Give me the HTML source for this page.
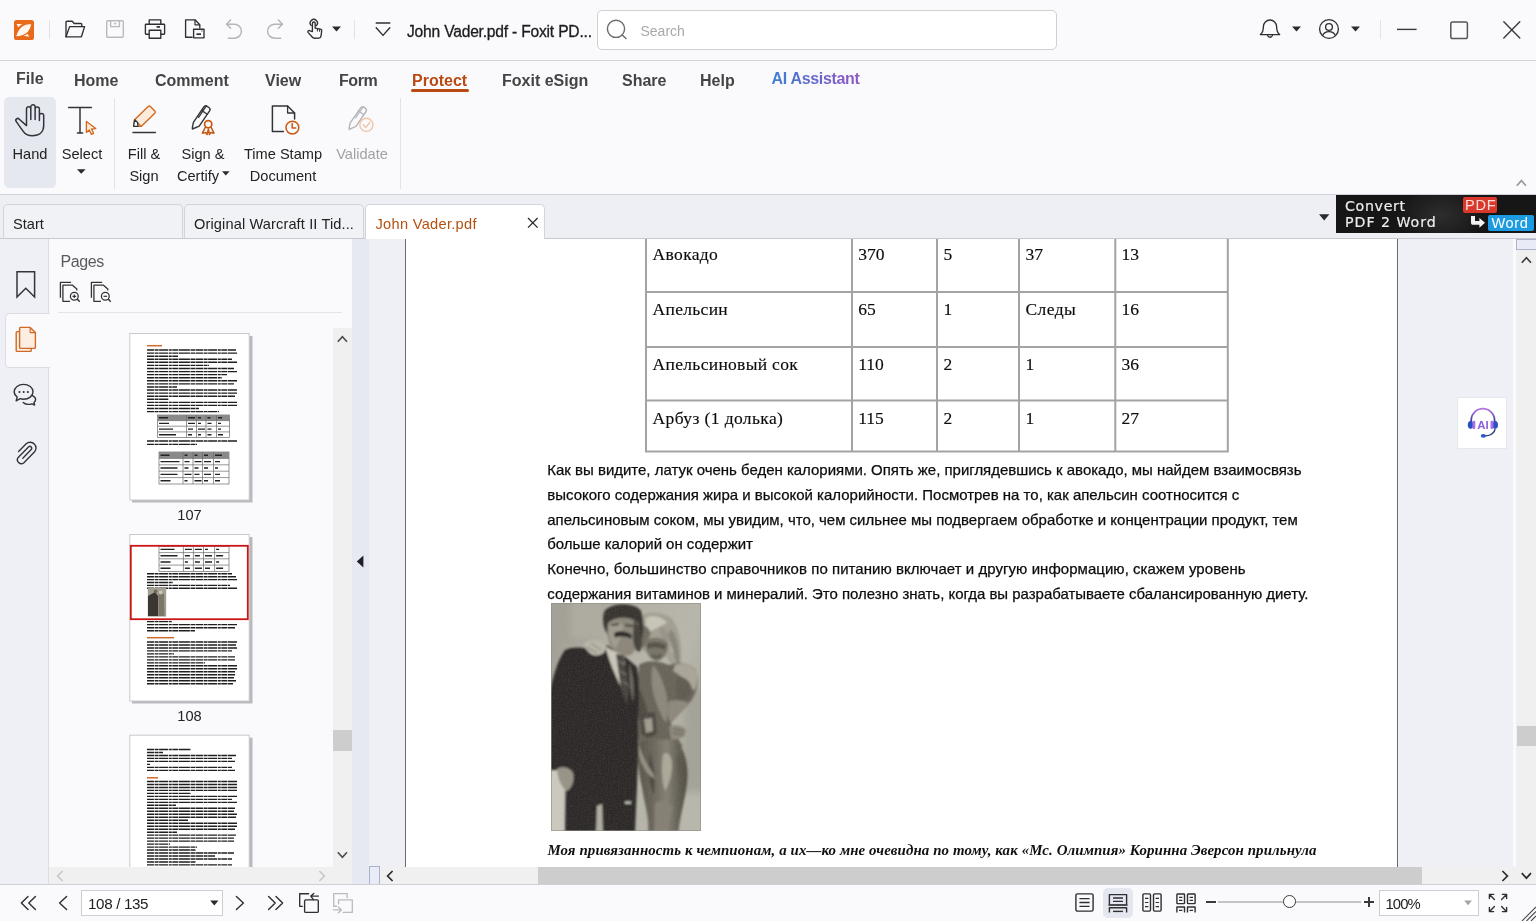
<!DOCTYPE html>
<html lang="en">
<head>
<meta charset="utf-8">
<title>John Vader.pdf - Foxit PDF Reader</title>
<style>
*{box-sizing:border-box;margin:0;padding:0}
html,body{width:1536px;height:921px;overflow:hidden;background:#fafafc;font-family:"Liberation Sans",sans-serif;color:#222}
.abs,.abs>*{position:absolute}
#app{position:relative;width:1536px;height:921px;overflow:hidden;will-change:transform}
#app div,#app span,#app svg{position:absolute}
svg{overflow:visible}
.t{white-space:nowrap;line-height:1}
/* title bar */
#titlebar{left:0;top:0;width:1536px;height:61px;background:#fafafc;border-bottom:1px solid #d2d3da}
.vsep{width:1px;background:#e2e3e8}
#search{left:597px;top:10px;width:460px;height:40px;border:1px solid #cfcfd4;border-radius:5px;background:#fff}
/* menu */
#menubar{left:0;top:61px;width:1536px;height:34px;background:#fafafc}
.menu{font-weight:bold;font-size:16px;color:#444;top:70.5px;white-space:nowrap;line-height:20px}
/* ribbon */
#ribbon{left:0;top:95px;width:1536px;height:100px;background:#fafafc;border-bottom:1px solid #cfd0d8}
.rl{font-size:14.6px;color:#222;white-space:nowrap;line-height:22px;text-align:center;margin-top:.6px}
/* tab bar */
#tabbar{left:0;top:195px;width:1536px;height:44px;background:#eeeff4;border-bottom:1px solid #c8c9d0}
.tab{top:204px;height:34px;border:1px solid #d3d4da;border-bottom:none;border-radius:5px 5px 0 0;background:#f1f2f6}
.tabt{font-size:14.6px;color:#222;top:214px;white-space:nowrap;line-height:20px}
/* panels */
#sidebar{left:0;top:239px;width:49px;height:645px;background:#eff0f5;border-right:1px solid #dcdde3}
#panel{left:49px;top:239px;width:303px;height:645px;background:#fafafc}
#splitter{left:352px;top:239px;width:17px;height:645px;background:#e6e9f2}
#docarea{left:369px;top:239px;width:1144px;height:628px;background:#eef0f5}
#page{left:405px;top:239px;width:993px;height:628px;background:#fff;border-left:1px solid #6a6a6a;border-right:1px solid #6a6a6a}
#status{left:0;top:884px;width:1536px;height:37px;background:#fafafc;border-top:1px solid #d0d1d8}
.ser{font-family:"Liberation Serif",serif;font-size:17.5px;line-height:20px;color:#0c0c0c;-webkit-text-stroke:.15px #0c0c0c;margin-top:-.4px}
.bod{font-size:14.97px;line-height:18px;color:#0c0c0c;-webkit-text-stroke:.25px #0c0c0c}
.cap{font-family:"Liberation Serif",serif;font-weight:bold;font-style:italic;font-size:14.9px;line-height:18px;color:#111}
</style>
</head>
<body>
<div id="app">
<div id="titlebar"></div>
<div id="menubar"></div>
<div id="ribbon"></div>
<div id="tabbar"></div>
<div id="sidebar"></div>
<div id="panel"></div>
<div id="splitter"></div>
<div id="docarea"></div>
<div id="page"></div>
<div id="status"></div>
<!--TITLE_S-->
<!-- ===== TITLE BAR ===== -->
<svg style="left:14px;top:20px" width="20" height="20" viewBox="0 0 20 20"><rect x="0" y="0" width="20" height="20" rx="2.6" fill="#ea6a1b"/><path d="M2.4 16.3 C3.400 12 5.400 8 10.600 5.200 C13 4.200 15.500 4 17.200 4.200 C16.800 7 15.400 10 13.400 12.200 C11 14.400 7 16 2.400 16.300 Z M2.600 4 L8.600 4 C6.600 5 5.200 6.200 4.300 7.600 Z M9.600 15.800 C11.400 15.200 12.600 14.600 13.600 13.800 L15.200 16.800 Z" fill="#fff6ee"/></svg>
<div class="vsep" style="left:49px;top:20px;height:19px"></div>
<svg style="left:64px;top:19px" width="22" height="20" viewBox="0 0 22 20" fill="none" stroke="#2e2e33" stroke-width="1.35" stroke-linejoin="round" stroke-linecap="round"><path d="M2 17.8 V3.2 a1 1 0 0 1 1-1 h5.2 l2 2.3 h6.6 a1 1 0 0 1 1 1 V7.6"/><path d="M2 17.8 L5.6 7.6 H20.6 L17.4 17.8 Z"/></svg>
<svg style="left:105px;top:19px" width="20" height="20" viewBox="0 0 20 20" fill="none" stroke="#b9b9be" stroke-width="1.4" stroke-linejoin="round"><rect x="1.7" y="1.7" width="16.6" height="16.6" rx="1"/><path d="M5.6 1.7 V7.6 H14.4 V1.7"/><path d="M9 4.6 h2.2" stroke-width="1.6"/></svg>
<svg style="left:144px;top:18px" width="22" height="22" viewBox="0 0 22 22" fill="none" stroke="#2e2e33" stroke-width="1.35" stroke-linejoin="round"><path d="M5.2 6.2 V1.8 H16.8 V6.2"/><path d="M5.2 16.2 H2 a.6 .6 0 0 1 -.6 -.6 V6.8 a.6 .6 0 0 1 .6 -.6 H20 a.6 .6 0 0 1 .6 .6 V15.6 a.6 .6 0 0 1 -.6 .6 H16.8"/><rect x="5.2" y="12.2" width="11.6" height="8"/><path d="M12.6 8.9 h3.4" stroke-width="1.7"/></svg>
<svg style="left:184px;top:18px" width="22" height="22" viewBox="0 0 22 22" fill="none" stroke="#2e2e33" stroke-width="1.35" stroke-linejoin="round"><path d="M8.6 19.2 H1.6 V1.8 H11 L15.8 6.8 V10.4"/><path d="M11 1.8 V6.8 H15.8" stroke-width="1.2"/><rect x="9.6" y="11.2" width="10.4" height="8.6" fill="#fafafc"/><path d="M12.4 16.2 h4.6" stroke-width="1.7"/><path d="M17.4 13 h1" stroke-width="1"/></svg>
<svg style="left:225px;top:18px" width="20" height="22" viewBox="0 0 20 22" fill="none" stroke="#b5b5ba" stroke-width="1.5" stroke-linecap="round" stroke-linejoin="round"><path d="M1.6 6.2 H9.4 A7 7 0 0 1 9.4 20.2 H3.4"/><path d="M5.6 2 L1.6 6.2 L5.6 10.2"/></svg>
<svg style="left:264px;top:18px" width="20" height="22" viewBox="0 0 20 22" fill="none" stroke="#b5b5ba" stroke-width="1.5" stroke-linecap="round" stroke-linejoin="round"><path d="M18.4 6.2 H10.6 A7 7 0 0 0 10.6 20.2 H16.6"/><path d="M14.4 2 L18.4 6.2 L14.4 10.2"/></svg>
<svg style="left:305px;top:18px" width="20" height="22" viewBox="0 0 20 22" fill="none" stroke="#2e2e33" stroke-width="1.35" stroke-linecap="round" stroke-linejoin="round"><path d="M6.2 7.6 A3.6 3.6 0 1 1 11.4 7.6"/><path d="M7.4 13.6 V5.4 a1.4 1.4 0 0 1 2.8 0 V10.2 l5.2 1 a1.6 1.6 0 0 1 1.3 1.8 l-.7 5 a2.6 2.6 0 0 1 -2.6 2.2 H9.6 a3 3 0 0 1 -2.4 -1.2 L3 14.4 a1.3 1.3 0 0 1 2 -1.6 Z"/><path d="M12.4 11 v2 M14.6 11.6 v1.6" stroke-width="1.1"/></svg>
<svg style="left:332px;top:26px" width="9" height="6" viewBox="0 0 9 6"><path d="M0 .4 H9 L4.5 5.6 Z" fill="#2a2a2e"/></svg>
<div class="vsep" style="left:354px;top:20px;height:19px"></div>
<svg style="left:375px;top:21px" width="16" height="16" viewBox="0 0 16 16" fill="none" stroke="#2e2e33" stroke-width="1.4" stroke-linecap="round" stroke-linejoin="round"><path d="M1.2 2 H14.8"/><path d="M1.2 6.8 L8 14.4 L14.8 6.8"/></svg>
<span class="t" id="wtitle" style="left:407px;top:21.7px;font-size:15.6px;line-height:20px;color:#1c1c20;-webkit-text-stroke:.3px #1c1c20;letter-spacing:-.2px">John Vader.pdf - Foxit PD...</span>
<div id="search"></div>
<svg style="left:606px;top:19px" width="22" height="22" viewBox="0 0 22 22" fill="none" stroke="#6a6a6e" stroke-width="1.4" stroke-linecap="round"><circle cx="10" cy="9.8" r="8.6"/><path d="M16.2 16 L20 19.6"/></svg>
<span class="t" id="searcht" style="left:640.5px;top:21px;font-size:14px;line-height:20px;color:#a9a9ad">Search</span>
<svg style="left:1258px;top:18px" width="24" height="22" viewBox="0 0 24 22" fill="none" stroke="#2e2e33" stroke-width="1.35" stroke-linecap="round" stroke-linejoin="round"><path d="M2.4 16.6 C5 14.6 5.4 12 5.4 8.6 A6.6 6.6 0 0 1 18.6 8.6 C18.6 12 19 14.6 21.6 16.6 Z"/><path d="M9.6 17.4 A2.5 2.5 0 0 0 14.4 17.4"/></svg>
<svg style="left:1292px;top:26px" width="9" height="6" viewBox="0 0 9 6"><path d="M0 .4 H9 L4.5 5.6 Z" fill="#2a2a2e"/></svg>
<svg style="left:1318px;top:18px" width="22" height="22" viewBox="0 0 22 22" fill="none" stroke="#2e2e33" stroke-width="1.35"><circle cx="11" cy="11" r="9.4"/><circle cx="11" cy="9" r="3.4"/><path d="M4.6 17.6 C5.8 14.6 8 13.6 11 13.6 C14 13.6 16.2 14.6 17.4 17.6"/></svg>
<svg style="left:1351px;top:26px" width="9" height="6" viewBox="0 0 9 6"><path d="M0 .4 H9 L4.5 5.6 Z" fill="#2a2a2e"/></svg>
<div class="vsep" style="left:1380px;top:20px;height:19px"></div>
<svg style="left:1397px;top:28px" width="20" height="3" viewBox="0 0 20 3"><path d="M0 1.4 H19.6" stroke="#3a3a3e" stroke-width="1.4"/></svg>
<svg style="left:1449px;top:20px" width="20" height="20" viewBox="0 0 20 20" fill="none" stroke="#55555a" stroke-width="1.5"><rect x="1.8" y="1.9" width="16.6" height="16.6" rx="1.8"/></svg>
<svg style="left:1502px;top:20px" width="20" height="20" viewBox="0 0 20 20" fill="none" stroke="#3a3a3e" stroke-width="1.4" stroke-linecap="round"><path d="M1.8 1.8 L17.8 18 M17.8 1.8 L1.8 18"/></svg>
<!--TITLE_E-->
<!--MENU_S-->
<!-- ===== MENU ===== -->
<span class="menu" id="m1" style="left:16px;top:69px">File</span>
<span class="menu" id="m2" style="left:74px">Home</span>
<span class="menu" id="m3" style="left:155px">Comment</span>
<span class="menu" id="m4" style="left:265px">View</span>
<span class="menu" id="m5" style="left:339px;letter-spacing:-.4px">Form</span>
<span class="menu" id="m6" style="left:412px;color:#b84a12">Protect</span>
<div style="left:411px;top:89px;width:58px;height:3.4px;border-radius:2px;background:#b84a12"></div>
<span class="menu" id="m7" style="left:502px">Foxit eSign</span>
<span class="menu" id="m8" style="left:622px">Share</span>
<span class="menu" id="m9" style="left:700px">Help</span>
<span class="menu" id="m10" style="left:771.5px;top:69px;letter-spacing:-.32px;background:linear-gradient(90deg,#3f7fd2 0%,#6a63cc 55%,#9357c4 100%);-webkit-background-clip:text;background-clip:text;color:transparent">AI Assistant</span>
<!--MENU_E-->
<!--RIBBON_S-->
<!-- ===== RIBBON ===== -->
<div style="left:4px;top:97px;width:52px;height:91px;border-radius:5px;background:#e6e8f0"></div>
<svg id="ic-hand" style="left:15px;top:103px" width="30" height="34" viewBox="0 0 30 34" fill="none" stroke="#33343a" stroke-width="1.5" stroke-linecap="round" stroke-linejoin="round"><path d="M11.5 22.6 V5.9 a2.15 2.15 0 0 1 4.3 0 V16.4 M15.8 16 V4 a2.15 2.15 0 0 1 4.3 0 V16 M20.1 16.400 V6.200 a2.150 2.150 0 0 1 4.300 0 V17.400 M24.400 17.400 V12.600 a2.150 2.150 0 0 1 4.300 0 V22.600 C28.700 29.400 24 32.800 17.400 32.800 C12.800 32.800 10.200 31.400 8.200 28.400 L1.300 18.600 a1.900 1.900 0 0 1 3 -2.400 L11.500 22.600"/></svg>
<span class="rl" id="r1" style="left:4px;top:142px;width:52px">Hand</span>
<svg id="ic-select" style="left:67px;top:105px" width="32" height="32" viewBox="0 0 32 32" fill="none" stroke-linecap="round" stroke-linejoin="round"><path d="M1.6 2.6 H24.4 M13 2.6 V28 M10.4 28 H15.6" stroke="#33343a" stroke-width="1.5"/><path d="M19.4 16.4 L19.4 27.4 L22.2 25 L24.4 29.4 L26.6 28.3 L24.5 24 L28.8 23.6 Z" stroke="#d2691e" stroke-width="1.3" fill="#fde9d6"/></svg>
<span class="rl" id="r2" style="left:56px;top:142px;width:52px">Select</span>
<svg style="left:77px;top:169px" width="9" height="5" viewBox="0 0 9 5"><path d="M0 .2 H8.6 L4.3 4.8 Z" fill="#2a2a2e"/></svg>
<div class="vsep" style="left:114px;top:98px;height:91px"></div>
<svg id="ic-fill" style="left:131px;top:105px" width="27" height="29" viewBox="0 0 27 29" fill="none" stroke-linecap="round" stroke-linejoin="round"><path d="M2.6 21.4 L3.6 14.8 L17.2 1.6 a1.6 1.6 0 0 1 2.2 0 L23.8 6 a1.6 1.6 0 0 1 0 2.2 L10.2 21.4 Z" stroke="#d2691e" stroke-width="1.4" fill="#fdebdb"/><path d="M3.6 14.8 L10.2 21.4" stroke="#d2691e" stroke-width="1.3"/><path d="M2.6 21.4 L3.6 14.8 L6.6 17.6 L7 21.4 Z" stroke="#33343a" stroke-width="1.3" fill="#fafafc"/><path d="M2 27.4 H24.4" stroke="#33343a" stroke-width="1.5"/></svg>
<span class="rl" id="r3" style="left:118px;top:142px;width:52px">Fill &amp;<br>Sign</span>
<svg id="ic-sign" style="left:190px;top:104px" width="27" height="32" viewBox="0 0 27 32" fill="none" stroke-linecap="round" stroke-linejoin="round"><path d="M2.4 23.4 L3.4 18.4 L13.8 3 a2.4 2.4 0 0 1 3.3 -.7 l1.8 1.2 a2.4 2.4 0 0 1 .7 3.3 L9.2 22.2 L2.4 25 Z" stroke="#33343a" stroke-width="1.4"/><path d="M11.6 6.4 L17.2 10.2 M16.4 1.8 L8.6 13.4" stroke="#33343a" stroke-width="1.3"/><circle cx="18.2" cy="20.2" r="3.6" stroke="#c85a14" stroke-width="1.7"/><path d="M15.4 23.2 L12.4 29.2 L15.6 28.4 L17 30.6 L18.4 25 M21 23.2 L24 29.2 L20.8 28.4 L19.4 30.6 L18.4 25" stroke="#c85a14" stroke-width="1.5"/></svg>
<span class="rl" id="r4" style="left:173px;top:142px;width:60px">Sign &amp;<br><span style="position:static;margin-right:10px">Certify</span></span>
<svg style="left:222px;top:171px" width="8" height="5" viewBox="0 0 8 5"><path d="M0 .2 H7.6 L3.8 4.4 Z" fill="#2a2a2e"/></svg>
<svg id="ic-ts" style="left:270px;top:104px" width="31" height="32" viewBox="0 0 31 32" fill="none" stroke-linecap="round" stroke-linejoin="round"><path d="M13.4 27.6 H2.4 V2 H17.6 L24.6 9 V15" stroke="#33343a" stroke-width="1.5"/><path d="M17.6 2 V9 H24.6" stroke="#33343a" stroke-width="1.3"/><circle cx="22.4" cy="23.6" r="6.4" stroke="#c85a14" stroke-width="1.5" fill="#fafafc"/><path d="M22.2 19.6 V24 H25.8" stroke="#c85a14" stroke-width="1.5"/></svg>
<span class="rl" id="r5" style="left:238px;top:142px;width:90px">Time Stamp<br>Document</span>
<svg id="ic-val" style="left:347px;top:105px" width="28" height="30" viewBox="0 0 28 30" fill="none" stroke-linecap="round" stroke-linejoin="round"><path d="M2.2 22.8 L3.2 17.8 L13.6 2.8 a2.3 2.3 0 0 1 3.2 -.6 l1.6 1.1 a2.3 2.3 0 0 1 .6 3.2 L9 21.4 L2.2 24.4 Z" stroke="#b4b4b9" stroke-width="1.4"/><path d="M11.4 6 L16.6 9.6 M16.2 1.6 L8.6 12.8" stroke="#b4b4b9" stroke-width="1.2"/><circle cx="19.4" cy="19.8" r="6.6" stroke="#efc7ab" stroke-width="1.4" fill="#fafafc"/><path d="M16.2 19.8 L18.6 22.4 L22.8 17.4" stroke="#efc7ab" stroke-width="1.5"/></svg>
<span class="rl" id="r6" style="left:332px;top:142px;width:60px;color:#a2a2a6">Validate</span>
<div class="vsep" style="left:400px;top:98px;height:91px"></div>
<svg style="left:1516px;top:179px" width="11" height="8" viewBox="0 0 11 8" fill="none" stroke="#9a9a9e" stroke-width="1.7"><path d="M.8 6.8 L5.4 1.6 L10 6.8"/></svg>
<!--RIBBON_E-->
<!--TABS_S-->
<!-- ===== TABS ===== -->
<div class="tab" style="left:3px;width:180px"></div>
<div class="tab" style="left:184px;width:180px"></div>
<div class="tab" style="left:365px;width:180px;background:#fff;height:35px"></div>
<span class="tabt" id="tb1" style="left:13px">Start</span>
<span class="tabt" id="tb2" style="left:194px;letter-spacing:.12px">Original Warcraft II Tid...</span>
<span class="tabt" id="tb3" style="left:375.5px;letter-spacing:.3px;color:#b5500f">John Vader.pdf</span>
<svg style="left:527px;top:217px" width="12" height="12" viewBox="0 0 12 12" fill="none" stroke="#2a2a2e" stroke-width="1.3"><path d="M1 1 L10.6 10.6 M10.6 1 L1 10.6"/></svg>
<svg style="left:1319px;top:214px" width="11" height="7" viewBox="0 0 11 7"><path d="M0 .3 H10.4 L5.2 6.4 Z" fill="#2a2a2e"/></svg>
<div id="banner" style="left:1336px;top:195px;width:200px;height:38px;background:#161616;overflow:hidden">
 <div style="left:60px;top:-10px;width:90px;height:60px;background:radial-gradient(ellipse at center,rgba(255,255,255,.10),rgba(255,255,255,0) 70%)"></div>
 <span class="t" id="bn1" style="left:9px;top:2.6px;font-family:'DejaVu Sans',sans-serif;font-size:14.2px;line-height:16px;color:#ececec;letter-spacing:.67px;-webkit-text-stroke:.2px #ececec">Convert</span>
 <span class="t" id="bn2" style="left:9px;top:19.2px;font-family:'DejaVu Sans',sans-serif;font-size:14.2px;line-height:16px;color:#ececec;letter-spacing:.95px;-webkit-text-stroke:.2px #ececec">PDF 2 Word</span>
 <div style="left:127px;top:2.4px;width:34px;height:16px;border-radius:2px;background:#d9382c"></div>
 <span class="t" id="bn3" style="left:129px;top:2.4px;font-size:14.6px;line-height:16px;color:#fbdcd6;letter-spacing:.8px">PDF</span>
 <svg style="left:134px;top:20px" width="16" height="14" viewBox="0 0 16 14"><path d="M1 1 H5 V6 H9.4 V3 L15 7.8 L9.4 12.8 V9.8 H3.4 C1.6 9.8 1 8.8 1 7.4 Z" fill="#f4f4f4"/></svg>
 <div style="left:152px;top:20.4px;width:46px;height:15.4px;border-radius:2px;background:#1d9be2"></div>
 <span class="t" id="bn4" style="left:155.5px;top:20.2px;font-size:14.6px;line-height:16px;color:#fff;letter-spacing:.6px">Word</span>
</div>
<!--TABS_E-->
<!--SIDEBAR_S-->
<!-- ===== SIDEBAR ===== -->
<svg style="left:15px;top:270px" width="22" height="29" viewBox="0 0 22 29" fill="none" stroke="#33343a" stroke-width="1.5" stroke-linejoin="miter"><path d="M2 1.8 H19.6 V27 L10.8 18.2 L2 27 Z"/></svg>
<div style="left:5px;top:313px;width:45px;height:55px;background:#fafafc;border:1px solid #dcdde3;border-right:none;border-radius:5px 0 0 5px"></div>
<svg style="left:15px;top:326px" width="22" height="27" viewBox="0 0 22 27" fill="none" stroke="#cf6a26" stroke-width="1.4" stroke-linejoin="round"><path d="M4.6 5.6 H2 a.8 .8 0 0 0 -.8 .8 V24.6 a.8 .8 0 0 0 .8 .8 H15.4 a.8 .8 0 0 0 .8 -.8 V22.4" fill="#fdeee2"/><path d="M4.6 2.2 a.8 .8 0 0 1 .8 -.8 H15.2 L20.4 6.6 V21.6 a.8 .8 0 0 1 -.8 .8 H5.4 a.8 .8 0 0 1 -.8 -.8 Z" fill="#fdeee2"/><path d="M15.2 1.4 V6.6 H20.4" stroke-width="1.2"/></svg>
<svg style="left:13px;top:383px" width="24" height="23" viewBox="0 0 24 23" fill="none" stroke="#33343a" stroke-width="1.4" stroke-linejoin="round" stroke-linecap="round"><path d="M19.4 12.6 C21.4 13.6 22.6 15 22.6 16.6 C22.6 17.8 22 18.8 21 19.6 L21.6 22 L18.8 20.8 C17.8 21.2 16.8 21.4 15.6 21.4 C13.4 21.4 11.4 20.6 10.2 19.4"/><path d="M10.6 1.4 C15.8 1.4 20 4.6 20 8.8 C20 13 15.8 16.2 10.6 16.2 C9.4 16.2 8.2 16 7.2 15.7 L3.2 17.8 L4.2 14 C2.4 12.7 1.2 10.9 1.2 8.8 C1.2 4.6 5.4 1.4 10.6 1.4 Z"/><path d="M6.4 8.9 h.1 M10.6 8.9 h.1 M14.8 8.9 h.1" stroke-width="2"/></svg>
<svg style="left:15px;top:441px" width="23" height="25" viewBox="0 0 23 25" fill="none" stroke="#33343a" stroke-width="1.4" stroke-linecap="round" stroke-linejoin="round"><path transform="rotate(180 11.5 12.7)" d="M15.2 8.2 L6.8 16.8 a1.9 1.9 0 0 0 2.7 2.7 L19.6 9.2 a3.9 3.9 0 0 0 -5.5 -5.5 L3.6 14.4 a5.8 5.8 0 0 0 8.2 8.2 L19.4 15"/></svg>
<!--SIDEBAR_E-->
<!--PANEL_S-->
<!-- ===== PANEL ===== -->
<span class="t" id="pgs" style="left:60.5px;top:251px;font-size:16px;line-height:22px;color:#5a5b61;letter-spacing:-.4px">Pages</span>
<svg style="left:52px;top:274px" width="35" height="35" viewBox="52 274 35 35" fill="none" stroke="#33343a" stroke-width="1.3" stroke-linecap="butt" stroke-linejoin="round"><path d="M71.100 282.400 H60.400 V297.700"/><path d="M70 301.300 H62.900 V285.200 H72.500 L76.800 289 V290.600"/><circle cx="74.300" cy="296.300" r="3.900"/><path d="M77.200 299 L79.700 301.700" stroke-width="1.500"/><path d="M72.500 296.300 H76.100 M74.300 294.500 V298.100" stroke-width="1.200"/></svg>
<svg style="left:83px;top:274px" width="35" height="35" viewBox="52 274 35 35" fill="none" stroke="#33343a" stroke-width="1.3" stroke-linecap="butt" stroke-linejoin="round"><path d="M71.100 282.400 H60.400 V297.700"/><path d="M70 301.300 H62.900 V285.200 H72.500 L76.800 289 V290.600"/><circle cx="74.300" cy="296.300" r="3.900"/><path d="M77.200 299 L79.700 301.700" stroke-width="1.500"/><path d="M72.500 296.300 H76.100" stroke-width="1.200"/></svg>
<div style="left:58px;top:312px;width:284px;height:1px;background:#e3e4e9"></div>
<div id="thumbs" style="left:49px;top:328px;width:284px;height:539px;overflow:hidden">
<svg style="left:0;top:0" width="284" height="539" viewBox="49 328 284 539">
<rect x="132" y="336.0" width="120.5" height="166.5" fill="#b9b9bd"/><rect x="129.8" y="333.5" width="119.4" height="166.5" fill="#fff" stroke="#c9c9cd" stroke-width="1"/>
<path d="M147 345.7H162" stroke="#d26a2a" stroke-width="1.5"/>
<path d="M147.0 350.0H236.0M147.0 353.1H237.0M147.0 356.2H178.0M147.0 359.2H232.0M147.0 362.3H237.0M147.0 365.4H209.0M147.0 368.5H234.0M147.0 371.6H237.0M147.0 374.6H227.0M147.0 377.7H222.0M147.0 380.8H237.0M147.0 383.9H234.0M147.0 387.0H177.0M147.0 390.0H237.0M147.0 393.1H237.0M147.0 396.2H235.0M147.0 399.3H169.0M147.0 402.4H237.0M147.0 405.4H237.0M147.0 408.5H199.0M147.0 411.6H219.0" stroke="#1f1f1f" stroke-width="1.4" stroke-dasharray="7 .6 4 .5 9 .7 3 .5 6 .6 11 .6 5 .5" />
<rect x="157.5" y="415.0" width="72.0" height="22.5" fill="#fff" stroke="#6a6a6a" stroke-width=".7"/><rect x="157.5" y="415.0" width="72.0" height="5.6" fill="#8a8a8a"/><path d="M157.5 420.6H229.5M157.5 426.2H229.5M157.5 431.9H229.5M186.5 415.0V437.5M196.5 415.0V437.5M206.0 415.0V437.5M216.5 415.0V437.5" stroke="#6a6a6a" stroke-width=".7"/><path d="M159.0 417.8h9.0M188.0 417.8h7.0M198.0 417.8h3.0M207.5 417.8h3.0M218.0 417.8h4.0M159.0 423.4h10.0M188.0 423.4h7.0M198.0 423.4h3.0M207.5 423.4h4.0M218.0 423.4h3.0M159.0 429.1h14.0M188.0 429.1h5.0M198.0 429.1h7.0M207.5 429.1h4.0M218.0 429.1h3.0M159.0 434.7h17.0M188.0 434.7h4.0M198.0 434.7h3.0M207.5 434.7h4.0M218.0 434.7h5.0" stroke="#222" stroke-width="1.4"/>
<path d="M147.0 441.0H237.0M147.0 444.4H197.0" stroke="#1f1f1f" stroke-width="1.4" stroke-dasharray="7 .6 4 .5 9 .7 3 .5 6 .6 11 .6 5 .5" />
<rect x="159.0" y="452.0" width="70.0" height="32.0" fill="#fff" stroke="#6a6a6a" stroke-width=".7"/><rect x="159.0" y="452.0" width="70.0" height="6.4" fill="#8a8a8a"/><path d="M159.0 458.4H229.0M159.0 464.8H229.0M159.0 471.2H229.0M159.0 477.6H229.0M183.0 452.0V484.0M193.0 452.0V484.0M202.5 452.0V484.0M213.5 452.0V484.0" stroke="#6a6a6a" stroke-width=".7"/><path d="M160.5 455.2h9.0M184.5 455.2h3.0M194.5 455.2h3.0M204.0 455.2h4.0M215.0 455.2h7.0M160.5 461.6h19.0M184.5 461.6h5.0M194.5 461.6h7.0M204.0 461.6h7.0M215.0 461.6h5.0M160.5 468.0h17.0M184.5 468.0h4.0M194.5 468.0h4.0M204.0 468.0h4.0M215.0 468.0h3.0M160.5 474.4h17.0M184.5 474.4h7.0M194.5 474.4h5.0M204.0 474.4h7.0M215.0 474.4h5.0M160.5 480.8h10.0M184.5 480.8h3.0M194.5 480.8h7.0M204.0 480.8h4.0M215.0 480.8h5.0" stroke="#222" stroke-width="1.4"/>
<rect x="132" y="537.0" width="120.5" height="166.5" fill="#b9b9bd"/><rect x="129.8" y="534.5" width="119.4" height="166.5" fill="#fff" stroke="#c9c9cd" stroke-width="1"/>
<rect x="159.0" y="546.3" width="70.0" height="25.1" fill="#fff" stroke="#6a6a6a" stroke-width=".7"/><path d="M159.0 552.6H229.0M159.0 558.8H229.0M159.0 565.1H229.0M183.4 546.3V571.4M193.4 546.3V571.4M203.5 546.3V571.4M214.6 546.3V571.4" stroke="#6a6a6a" stroke-width=".7"/><path d="M160.5 549.4h14.0M184.9 549.4h7.0M194.9 549.4h7.0M205.0 549.4h3.0M216.1 549.4h3.0M160.5 555.7h17.0M184.9 555.7h5.0M194.9 555.7h5.0M205.0 555.7h7.0M216.1 555.7h7.0M160.5 562.0h10.0M184.9 562.0h3.0M194.9 562.0h5.0M205.0 562.0h7.0M216.1 562.0h3.0M160.5 568.3h10.0M184.9 568.3h5.0M194.9 568.3h7.0M205.0 568.3h5.0M216.1 568.3h7.0" stroke="#222" stroke-width="1.4"/>
<path d="M147.0 573.8H232.0M147.0 576.7H236.0M147.0 579.6H237.0M147.0 582.5H173.0M147.0 585.4H230.0M147.0 588.3H237.0" stroke="#1f1f1f" stroke-width="1.4" stroke-dasharray="7 .6 4 .5 9 .7 3 .5 6 .6 11 .6 5 .5" />
<rect x="147.8" y="588" width="18.4" height="28.6" fill="#a29e90"/><path d="M148 596 L155 592 L158 596 L158 616 L148 616 Z" fill="#3a3733"/><path d="M158.5 592 L164 594 L164.5 616 L158.5 616 Z" fill="#7d776a"/><circle cx="155.6" cy="591.4" r="1.8" fill="#6e685c"/><circle cx="160.6" cy="592.4" r="2" fill="#c9c4b4"/>
<path d="M147.0 621.6H172.0M147.0 624.6H237.0M147.0 627.7H235.0M147.0 630.8H195.0" stroke="#1f1f1f" stroke-width="1.4" stroke-dasharray="7 .6 4 .5 9 .7 3 .5 6 .6 11 .6 5 .5" />
<path d="M147 637.7H174" stroke="#d26a2a" stroke-width="1.5"/>
<path d="M147.0 642.0H237.0M147.0 645.0H236.0M147.0 648.0H237.0M147.0 650.9H232.0M147.0 653.9H174.0M147.0 656.9H235.0M147.0 659.9H235.0M147.0 662.9H205.0M147.0 665.8H237.0M147.0 668.8H237.0M147.0 671.8H235.0M147.0 674.8H235.0M147.0 677.8H234.0M147.0 680.7H236.0M147.0 683.7H233.0" stroke="#1f1f1f" stroke-width="1.4" stroke-dasharray="7 .6 4 .5 9 .7 3 .5 6 .6 11 .6 5 .5" />
<rect x="130.8" y="545.8" width="117" height="73.4" fill="none" stroke="#cc1616" stroke-width="1.8"/>
<rect x="132" y="737.7" width="120.5" height="165.3" fill="#b9b9bd"/><rect x="129.8" y="735.2" width="119.4" height="165.3" fill="#fff" stroke="#c9c9cd" stroke-width="1"/>
<path d="M147.0 749.5H191.0M147.0 752.5H163.0M147.0 755.5H236.0M147.0 758.4H232.0M147.0 761.4H235.0M147.0 764.4H150.0M147.0 767.4H232.0M147.0 770.4H235.0" stroke="#1f1f1f" stroke-width="1.4" stroke-dasharray="7 .6 4 .5 9 .7 3 .5 6 .6 11 .6 5 .5" />
<path d="M147 777.8H158" stroke="#d26a2a" stroke-width="1.5"/>
<path d="M147.0 781.5H237.0M147.0 784.5H237.0M147.0 787.5H237.0M147.0 790.4H237.0M147.0 793.4H191.0M147.0 796.4H237.0M147.0 799.4H232.0M147.0 802.4H237.0M147.0 805.3H176.0M147.0 808.3H235.0M147.0 811.3H234.0M147.0 814.3H237.0M147.0 817.3H236.0M147.0 820.2H188.0M147.0 823.2H237.0M147.0 826.2H237.0M147.0 829.2H235.0M147.0 832.2H177.0M147.0 835.1H236.0M147.0 838.1H234.0M147.0 841.1H234.0M147.0 844.1H170.0M147.0 847.1H197.0M147.0 850.0H196.0M147.0 853.0H234.0M147.0 856.0H215.0M147.0 859.0H232.0M147.0 862.0H196.0M147.0 864.9H232.0" stroke="#1f1f1f" stroke-width="1.4" stroke-dasharray="7 .6 4 .5 9 .7 3 .5 6 .6 11 .6 5 .5" />
</svg>
<span class="t" id="n107" style="left:129px;top:505px;width:121px;text-align:center;font-size:14.6px;line-height:20px;color:#222;transform:translate(-49px,-328px)">107</span>
<span class="t" id="n108" style="left:129px;top:706px;width:121px;text-align:center;font-size:14.6px;line-height:20px;color:#222;transform:translate(-49px,-328px)">108</span>
</div>
<div style="left:333px;top:328px;width:19px;height:539px;background:#f0f0f0"></div>
<svg style="left:337px;top:335px" width="11" height="8" viewBox="0 0 11 8" fill="none" stroke="#4a4a4e" stroke-width="1.6"><path d="M.8 6.8 L5.4 1.8 L10 6.8"/></svg>
<div style="left:333px;top:730px;width:19px;height:21px;background:#cdcdcd"></div>
<svg style="left:337px;top:851px" width="11" height="8" viewBox="0 0 11 8" fill="none" stroke="#4a4a4e" stroke-width="1.6"><path d="M.8 1.2 L5.4 6.2 L10 1.2"/></svg>
<div style="left:49px;top:867px;width:303px;height:17px;background:#f0f0f0"></div>
<svg style="left:56px;top:870px" width="8" height="12" viewBox="0 0 8 12" fill="none" stroke="#c6c6c8" stroke-width="1.6"><path d="M6.6 1 L1.6 6 L6.6 11"/></svg>
<svg style="left:318px;top:870px" width="8" height="12" viewBox="0 0 8 12" fill="none" stroke="#c6c6c8" stroke-width="1.6"><path d="M1.4 1 L6.4 6 L1.4 11"/></svg>
<svg style="left:356px;top:555px" width="8" height="13" viewBox="0 0 8 13"><path d="M7.4 .6 V12.4 L.8 6.5 Z" fill="#1e1e22"/></svg>
<!--PANEL_E-->
<!--DOC_S-->
<!-- ===== DOC ===== -->
<div id="pagec" style="left:406px;top:239px;width:991px;height:628px;overflow:hidden">
<svg style="left:0;top:0" width="991" height="628" viewBox="406 239 991 628">
<path d="M646.0 236V452.4M852.0 236V452.4M937.0 236V452.4M1019.0 236V452.4M1115.3 236V452.4M1227.8 236V452.4M645.0 292.0H1228.8M645.0 347.0H1228.8M645.0 400.6H1228.8M645.0 451.4H1228.8" stroke="#a3a3a3" stroke-width="2" fill="none"/>
</svg>
<span class="t ser" id="c1" style="letter-spacing:0.340px;left:246.6px;top:5.2px">Авокадо</span>
<span class="t ser" id="c2" style="left:452.2px;top:5.2px">370</span>
<span class="t ser" id="c3" style="left:537.6px;top:5.2px">5</span>
<span class="t ser" id="c4" style="left:619.4px;top:5.2px">37</span>
<span class="t ser" id="c5" style="left:715.6px;top:5.2px">13</span>
<span class="t ser" id="c6" style="letter-spacing:0.300px;left:246.6px;top:59.9px">Апельсин</span>
<span class="t ser" id="c7" style="left:452.2px;top:59.9px">65</span>
<span class="t ser" id="c8" style="left:537.6px;top:59.9px">1</span>
<span class="t ser" id="c9" style="letter-spacing:0.460px;left:619.4px;top:59.9px">Следы</span>
<span class="t ser" id="c10" style="left:715.6px;top:59.9px">16</span>
<span class="t ser" id="c11" style="letter-spacing:0.310px;left:246.6px;top:115.4px">Апельсиновый сок</span>
<span class="t ser" id="c12" style="left:452.2px;top:115.4px">110</span>
<span class="t ser" id="c13" style="left:537.6px;top:115.4px">2</span>
<span class="t ser" id="c14" style="left:619.4px;top:115.4px">1</span>
<span class="t ser" id="c15" style="left:715.6px;top:115.4px">36</span>
<span class="t ser" id="c16" style="letter-spacing:0.380px;left:246.6px;top:169.4px">Арбуз (1 долька)</span>
<span class="t ser" id="c17" style="left:452.2px;top:169.4px">115</span>
<span class="t ser" id="c18" style="left:537.6px;top:169.4px">2</span>
<span class="t ser" id="c19" style="left:619.4px;top:169.4px">1</span>
<span class="t ser" id="c20" style="left:715.6px;top:169.4px">27</span>
<span class="t bod" id="b1" style="letter-spacing:0.002px;left:141.3px;top:221.8px">Как вы видите, латук очень беден калориями. Опять же, приглядевшись к авокадо, мы найдем взаимосвязь</span>
<span class="t bod" id="b2" style="letter-spacing:0.007px;left:141.3px;top:246.7px">высокого содержания жира и высокой калорийности. Посмотрев на то, как апельсин соотносится с</span>
<span class="t bod" id="b3" style="letter-spacing:-0.003px;left:141.3px;top:271.6px">апельсиновым соком, мы увидим, что, чем сильнее мы подвергаем обработке и концентрации продукт, тем</span>
<span class="t bod" id="b4" style="letter-spacing:-0.029px;left:141.3px;top:296.4px">больше калорий он содержит</span>
<span class="t bod" id="b5" style="letter-spacing:0.063px;left:141.3px;top:321.3px">Конечно, большинство справочников по питанию включает и другую информацию, скажем уровень</span>
<span class="t bod" id="b6" style="letter-spacing:-0.009px;left:141.3px;top:346.2px">содержания витаминов и минералий. Это полезно знать, когда вы разрабатываете сбалансированную диету.</span>
<!--PHOTO_S-->
<svg id="photo" style="left:145px;top:364px" width="150" height="228" viewBox="0 0 150 228">
<defs>
<filter id="pb" x="-10%" y="-10%" width="120%" height="120%"><feGaussianBlur stdDeviation="1.1"/></filter>
<filter id="pb2" x="-20%" y="-20%" width="140%" height="140%"><feGaussianBlur stdDeviation="3"/></filter>
<filter id="grain" x="0" y="0" width="100%" height="100%"><feTurbulence type="fractalNoise" baseFrequency="0.8" numOctaves="2" seed="3"/><feColorMatrix type="matrix" values="0 0 0 0 0.42  0 0 0 0 0.41  0 0 0 0 0.38  0.6 0.6 0 0 -0.42"/></filter>
<linearGradient id="bgg" x1="0" y1="0" x2="1" y2=".6"><stop offset="0" stop-color="#9d9b91"/><stop offset=".4" stop-color="#b4b2a7"/><stop offset=".75" stop-color="#b9b7ac"/><stop offset="1" stop-color="#a9a79c"/></linearGradient>
<linearGradient id="legg" x1="0" y1="0" x2="1" y2="0"><stop offset="0" stop-color="#57524a"/><stop offset=".3" stop-color="#69645a"/><stop offset=".58" stop-color="#857f73"/><stop offset=".82" stop-color="#625d53"/><stop offset="1" stop-color="#4c4841"/></linearGradient>
<clipPath id="pc"><rect x="0" y="0" width="150" height="228"/></clipPath>
</defs>
<g clip-path="url(#pc)">
<rect x="0" y="0" width="150" height="228" fill="url(#bgg)"/>
<g filter="url(#pb2)">
 <rect x="-6" y="164" width="22" height="70" fill="#cdcbc0"/>
 <rect x="82" y="190" width="16" height="44" fill="#b8b6ab"/>
 <rect x="126" y="190" width="30" height="44" fill="#bab8ad"/>
 <rect x="134" y="86" width="20" height="100" fill="#a5a398"/>
 <rect x="-4" y="-4" width="50" height="44" fill="#a3a197"/>
 <rect x="20" y="-4" width="30" height="40" fill="#aeaca1"/>
</g>
<g filter="url(#pb)">
 <!-- woman hair -->
 <path d="M87 16 C92 8 110 8 119 14 C128 22 132 40 130 68 C124 66 118 60 116 54 L92 48 C86 40 84 26 87 16 Z" fill="#a39f92"/>
 <path d="M95 15 C102 11 112 14 116 20 C111 23 104 25 99 29 C95 26 94 20 95 15 Z" fill="#c9c6b9"/><path d="M118 30 C122 36 124 44 124 52 L120 48 C120 42 119 36 118 30 Z" fill="#c2bfb2"/>
 <path d="M88 24 C92 20 98 24 100 30 C98 36 94 40 92 46 C88 40 86 32 88 24 Z" fill="#6f6a5f"/>
 <path d="M120 26 C127 34 129 50 128 64 C123 56 121 42 117 32 Z" fill="#89847a"/>
 <path d="M108 24 C114 24 118 30 118 38 L112 36 C110 32 108 28 108 24 Z" fill="#98938a"/>
 <!-- woman face -->
 <path d="M94 38 C100 33 112 34 117 40 C118 48 113 57 106 58 C99 57 94 50 94 38 Z" fill="#787368"/>
 <path d="M96 41 C102 38 110 39 115 42 L114 47 C108 44 101 44 97 46 Z" fill="#544f47"/>
 <path d="M100 51 C104 53 108 53 111 50 L110 54 C107 56 103 56 101 54 Z" fill="#5a554c"/>
 <!-- woman torso -->
 <path d="M88 62 C96 56 108 58 118 62 C128 58 138 60 144 66 C149 74 147 88 140 98 C134 106 126 112 120 120 C122 130 128 136 132 144 L88 142 C85 122 84 100 86 84 Z" fill="#676258"/>
 <!-- shoulder highlight & bicep -->
 <path d="M124 62 C132 58 142 62 146 70 C147 76 146 82 143 88 C138 80 130 72 122 68 Z" fill="#aaa598"/>
 <path d="M128 74 C135 74 141 80 141 88 C138 95 132 99 127 96 C124 90 124 80 128 74 Z" fill="#5f5a51"/>
 <path d="M118 98 C126 96 134 98 138 100 C132 108 126 114 120 120 C116 114 115 106 118 98 Z" fill="#8d877b"/>
 <!-- chest highlight -->
 <path d="M102 62 C108 68 113 80 116 94 C117 104 117 112 115 120 C110 113 105 101 102 89 C100 79 100 69 102 62 Z" fill="#8d877b"/>
 <path d="M88 86 C92 92 96 104 98 116 L90 122 C86 112 86 96 88 86 Z" fill="#4f4a43"/>
 <!-- medal -->
 <path d="M89 111 L104 109 L106 130 C101 136 94 136 90 130 Z" fill="#4c473f"/>
 <path d="M93 116 L101 115 L102 128 L95 130 Z" fill="#a19c8f"/>
 <!-- hand on hip -->
 <path d="M118 124 C124 120 133 122 135 128 C134 135 127 138 120 136 Z" fill="#8e887c"/>
 <path d="M122 126 L133 128 M122 130 L133 132" stroke="#5a554c" stroke-width="1" fill="none"/>
 <!-- legs -->
 <path d="M88 140 C96 134 110 138 122 136 C133 142 138 160 136 180 C134 198 129 212 127 232 L97 232 C99 214 93 200 91 184 C87 168 86 152 88 140 Z" fill="url(#legg)"/>
 <path d="M112 152 C116 147 121 152 121 162 C121 173 118 181 114 188 C111 180 110 163 112 152 Z" fill="#aea89a"/>
 <path d="M99 150 C103 160 105 176 103 192 C99 184 95 164 99 150 Z" fill="#4f4a43"/>
 <path d="M88 142 C92 154 96 162 102 170 L104 176 C96 172 90 162 88 152 Z" fill="#948e81"/>
 <path d="M126 150 C132 158 134 172 132 188 C128 178 126 164 126 150 Z" fill="#5a554c"/>
 <path d="M104 200 C110 196 118 198 122 204 C120 214 118 222 117 232 L103 232 C104 220 103 210 104 200 Z" fill="#857f73"/>
 <!-- suit -->
 <path d="M14 47 C24 42 36 45 48 49 L56 42 L72 52 L86 64 C89 82 88 100 87 120 C88 150 86 180 84 232 L14 232 L15 167 L-2 167 L-2 92 C2 74 6 58 14 47 Z" fill="#2b2825"/>
 <!-- hand on shoulder (woman's) -->
 <path d="M33 41 C38 35 48 36 54 41 C56 46 54 51 48 52 C42 54 36 50 33 41 Z" fill="#bab6a9"/>
 <path d="M36 44 L46 50 M40 40 L50 47" stroke="#7a756a" stroke-width="1" fill="none"/>
 <!-- man head -->
 <path d="M53 9 C59 -1 84 -1 90 8 C93 16 93 28 91 36 L86 22 C80 15 66 15 59 22 L57 32 C52 26 51 15 53 9 Z" fill="#36322d"/>
 <path d="M57 20 C64 13 80 13 87 20 C90 30 88 42 82 50 C76 55 66 54 62 48 C57 40 55 30 57 20 Z" fill="#8c867a"/>
 <path d="M58 22 C62 18 68 18 72 22 C72 30 68 40 64 46 C59 40 57 30 58 22 Z" fill="#a19b8e"/>
 <path d="M83 17 C90 23 92 36 90 47 C86 52 82 44 82 32 Z" fill="#433f39"/>
 <path d="M63 30 C68 27 76 28 81 32 L80 36 C75 33 68 33 64 35 Z" fill="#2b2825"/>
 <path d="M60 22 L68 21 M74 22 L82 23" stroke="#3b3732" stroke-width="1.8" fill="none"/>
 <!-- shirt -->
 <path d="M54 43 C60 47 66 50 72 52 L74 60 L70 84 C64 72 58 58 54 43 Z" fill="#cbc8bc"/>
 <!-- tie -->
 <path d="M65 51 L72 52 L78 84 L76 102 L70 86 Z" fill="#47433c"/>
 <path d="M67 58 L74 62 M69 68 L76 72 M71 78 L77 82" stroke="#8a8579" stroke-width="1" fill="none"/>
 <path d="M78 60 C82 70 84 84 82 100 L79 84 Z" fill="#6a655b"/>
 <!-- man's hand -->
 <path d="M6 166 C10 163 19 164 22 170 C24 177 21 185 16 188 C11 185 7 177 6 166 Z" fill="#989286"/>
 <!-- trouser gap -->
 <path d="M46 203 L51 201 L52 232 L45 232 Z" fill="#b1afa4"/>
 <rect x="74" y="198.500" width="6" height="2.200" fill="#d2d0c4"/>
</g>
<rect x="0" y="0" width="150" height="228" filter="url(#grain)" opacity=".3"/>
<rect x=".5" y=".5" width="149" height="227" fill="none" stroke="#8f8d83" stroke-width="1" opacity=".6"/>
</g>
</svg>
<!--PHOTO_E-->
<span class="t cap" id="cap" style="letter-spacing:0.100px;left:141.4px;top:601.8px">Моя привязанность к чемпионам, а их—ко мне очевидна по тому, как «Мс. Олимпия» Коринна Эверсон прильнула</span>
</div>
<div style="left:1458px;top:398px;width:48px;height:49.5px;background:#fff;box-shadow:0 0 0 1px rgba(225,227,236,.6)"></div>
<svg id="aibtn" style="left:1458px;top:398px" width="48" height="50" viewBox="1458 398 48 50" fill="none"><defs><linearGradient id="ag" x1="0" y1="0" x2="0" y2="1"><stop offset="0" stop-color="#b574e6"/><stop offset=".45" stop-color="#7a5ccc"/><stop offset="1" stop-color="#1f2f78"/></linearGradient></defs><path d="M1471.200 423 V420.400 A11.700 11.700 0 0 1 1494.600 420.400 V423" stroke="url(#ag)" stroke-width="1.700"/><ellipse cx="1470.600" cy="424.800" rx="2.800" ry="3.900" fill="#2c4fc4"/><ellipse cx="1495.200" cy="424.800" rx="2.800" ry="3.900" fill="#2c4fc4"/><rect x="1472.400" y="420.800" width="2.900" height="8.200" rx="1.200" fill="#a672e2"/><rect x="1490.500" y="420.800" width="2.900" height="8.200" rx="1.200" fill="#a672e2"/><path d="M1495.200 428.600 C1494.400 433 1490.400 435.600 1485.600 435.800" stroke="#26357e" stroke-width="1.300"/><ellipse cx="1483.400" cy="435.900" rx="2.700" ry="1.800" fill="#2c58c8"/><text x="1482.900" y="429.300" text-anchor="middle" font-family="Liberation Sans, sans-serif" font-weight="bold" font-size="11.4" fill="#8a5fd6">AI</text></svg>
<div style="left:1516px;top:239px;width:20px;height:628px;background:#f0f0f0"></div>
<div style="left:1516px;top:239px;width:20px;height:11px;background:#e9ecf6;border:1px solid #aab2cc;border-right:none"></div>
<svg style="left:1521px;top:256px" width="11" height="8" viewBox="0 0 11 8" fill="none" stroke="#3a3a3e" stroke-width="1.6"><path d="M.8 6.8 L5.4 1.8 L10 6.8"/></svg>
<div style="left:1517px;top:726px;width:19px;height:20px;background:#cdcdcd"></div>
<div style="left:369px;top:867px;width:1167px;height:17px;background:#f0f0f0"></div>
<div style="left:369px;top:866px;width:11px;height:18px;background:#e9ecf6;border:1px solid #aab2cc;border-bottom:none"></div>
<svg style="left:386px;top:870px" width="8" height="12" viewBox="0 0 8 12" fill="none" stroke="#2a2a2e" stroke-width="1.7"><path d="M6.6 1 L1.6 6 L6.6 11"/></svg>
<div style="left:538px;top:867px;width:884px;height:17px;background:#cdcdcd"></div>
<svg style="left:1501px;top:870px" width="8" height="12" viewBox="0 0 8 12" fill="none" stroke="#2a2a2e" stroke-width="1.7"><path d="M1.4 1 L6.4 6 L1.4 11"/></svg>
<svg style="left:1521px;top:872px" width="11" height="8" viewBox="0 0 11 8" fill="none" stroke="#2a2a2e" stroke-width="1.7"><path d="M.8 1.2 L5.4 6.2 L10 1.2"/></svg>
<!--DOC_E-->
<!--STATUS_S-->
<!-- ===== STATUS ===== -->
<svg style="left:20px;top:895px" width="17" height="16" viewBox="0 0 17 16" fill="none" stroke="#2e2e33" stroke-width="1.4" stroke-linecap="round" stroke-linejoin="round"><path d="M8 1.4 L1.4 8 L8 14.6 M15.4 1.4 L8.8 8 L15.4 14.6"/></svg>
<svg style="left:58px;top:895px" width="10" height="16" viewBox="0 0 10 16" fill="none" stroke="#2e2e33" stroke-width="1.4" stroke-linecap="round" stroke-linejoin="round"><path d="M8.6 1.4 L1.6 8 L8.6 14.6"/></svg>
<div style="left:81px;top:890px;width:142px;height:26px;background:#fff;border:1px solid #cdced4"></div>
<span class="t" id="pgno" style="left:88px;top:893.5px;letter-spacing:-.35px;font-size:15.2px;line-height:20px;color:#222">108 / 135</span>
<svg style="left:210px;top:900px" width="9" height="6" viewBox="0 0 9 6"><path d="M.2 .4 H8.4 L4.3 5.6 Z" fill="#2a2a2e"/></svg>
<svg style="left:235px;top:895px" width="10" height="16" viewBox="0 0 10 16" fill="none" stroke="#2e2e33" stroke-width="1.4" stroke-linecap="round" stroke-linejoin="round"><path d="M1.4 1.4 L8.4 8 L1.4 14.6"/></svg>
<svg style="left:267px;top:895px" width="17" height="16" viewBox="0 0 17 16" fill="none" stroke="#2e2e33" stroke-width="1.4" stroke-linecap="round" stroke-linejoin="round"><path d="M1.6 1.4 L8.2 8 L1.6 14.6 M9 1.4 L15.6 8 L9 14.6"/></svg>
<svg style="left:298px;top:891px" width="22" height="23" viewBox="298 891 22 23" fill="none" stroke="#2e2e33" stroke-width="1.35" stroke-linejoin="round" stroke-linecap="round"><path d="M308.600 893.700 H299.700 V906.300 H302.400"/><rect x="304.600" y="899.900" width="13.700" height="12.500" rx="1.200"/><path d="M318.400 896.100 H311 M313.800 893.400 L310.800 896.100 L313.400 899.600"/></svg>
<svg style="left:332px;top:891px" width="22" height="23" viewBox="332 891 22 23" fill="none" stroke="#bcbcc0" stroke-width="1.35" stroke-linejoin="round" stroke-linecap="round"><path d="M347.200 897.600 V893.600 H333.700 V906.200 H336.400"/><path d="M338.600 903.800 V899.900 H352.300 V912.400 H343.200"/><path d="M333.400 909.900 H341.200 M338.400 907 L341.400 909.900 L338.400 912.800"/></svg>
<!-- view icons -->
<svg style="left:1075px;top:893px" width="19" height="19" viewBox="0 0 19 19" fill="none" stroke="#2e2e33" stroke-width="1.4" stroke-linejoin="round"><rect x=".9" y=".9" width="17.2" height="17.2" rx="1.6"/><path d="M4.4 5.6 H14.6 M4.4 9.5 H14.6 M4.4 13.4 H14.6"/></svg>
<div style="left:1103px;top:887.500px;width:30px;height:30.500px;border-radius:5px;background:#e4e7f0"></div>
<svg style="left:1108px;top:892.5px" width="20" height="20" viewBox="0 0 20 20" fill="none" stroke="#2e2e33" stroke-width="1.4" stroke-linejoin="round"><path d="M1.400 11 V1.600 H18.600 V11"/><path d="M5 5 H15 M5 8.400 H15"/><path d="M.400 12 H19.600" stroke-width="1.700"/><path d="M1.400 19.400 V14.800 H18.600 V19.400"/><path d="M5 18.400 H15"/></svg>
<svg style="left:1142px;top:893px" width="20" height="19" viewBox="0 0 20 19" fill="none" stroke="#2e2e33" stroke-width="1.4" stroke-linejoin="round"><rect x=".9" y=".9" width="7.6" height="17.2" rx="1"/><rect x="11.500" y=".9" width="7.600" height="17.200" rx="1"/><path d="M3 5.400 H6.400 M3 9.500 H6.400 M3 13.600 H6.400 M13.600 5.400 H17 M13.600 9.500 H17 M13.600 13.600 H17" stroke-width="1.2"/></svg>
<svg style="left:1176px;top:892.5px" width="20" height="20" viewBox="0 0 20 20" fill="none" stroke="#2e2e33" stroke-width="1.4" stroke-linejoin="round"><rect x=".9" y="1" width="7.600" height="9.600" rx=".6"/><rect x="11.500" y="1" width="7.600" height="9.600" rx=".6"/><path d="M3 4.400 H6.400 M3 7.400 H6.400 M13.600 4.400 H17 M13.600 7.400 H17" stroke-width="1.200"/><path d="M.900 19.400 V14 H8.500 V19.400 M11.500 19.400 V14 H19.100 V19.400"/><path d="M3 17.400 H6.400 M13.600 17.400 H17" stroke-width="1.200"/></svg>
<div style="left:1205.500px;top:900.500px;width:10px;height:2px;background:#3a3a3e"></div>
<div style="left:1218px;top:900.600px;width:143px;height:2px;background:#c3c3c6"></div>
<div style="left:1283px;top:895.200px;width:12.800px;height:12.800px;border-radius:50%;background:#fff;border:1.3px solid #3a3a3e"></div>
<div style="left:1364px;top:900.500px;width:10px;height:2px;background:#3a3a3e"></div>
<div style="left:1368px;top:896.500px;width:2px;height:10px;background:#3a3a3e"></div>
<div style="left:1379px;top:890px;width:100px;height:26px;background:#fff;border:1px solid #cdced4"></div>
<span class="t" id="zoomv" style="left:1385.500px;top:893.5px;letter-spacing:-.9px;font-size:14.8px;line-height:20px;color:#222">100%</span>
<svg style="left:1464px;top:900px" width="9" height="6" viewBox="0 0 9 6"><path d="M.2 .4 H8 L4.100 5.200 Z" fill="#a4a4a8"/></svg>
<svg style="left:1488px;top:893px" width="20" height="20" viewBox="0 0 20 20" fill="none" stroke="#2e2e33" stroke-width="1.400" stroke-linecap="round" stroke-linejoin="round"><path d="M1.400 5.600 V1.400 H5.600 M1.600 1.600 L6.400 6.400 M14.400 1.400 H18.600 V5.600 M18.400 1.600 L13.600 6.400 M1.400 14.400 V18.600 H5.600 M1.600 18.400 L6.400 13.600 M14.400 18.600 H18.600 V14.400 M18.400 18.400 L13.600 13.600"/></svg>
<svg style="left:1519px;top:904px" width="17" height="17" viewBox="0 0 17 17" fill="none" stroke="#4a4a4e" stroke-width="1.100"><path d="M17 3 L3 17 M17 7.500 L7.500 17 M17 12 L12 17"/></svg>
<!--STATUS_E-->
</div>
</body>
</html>
